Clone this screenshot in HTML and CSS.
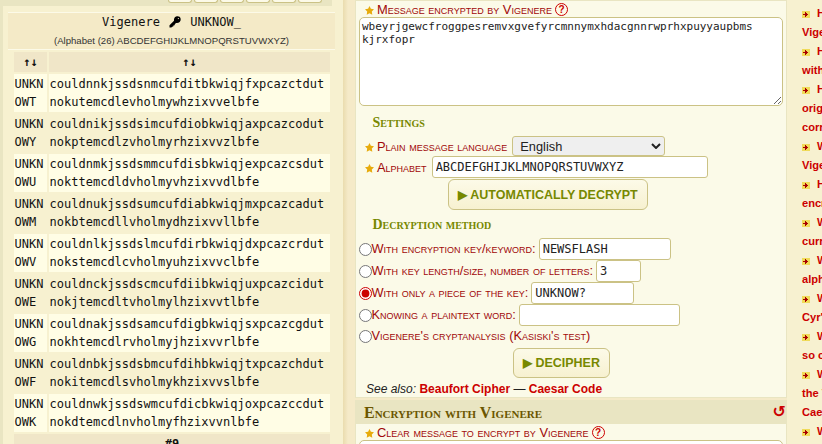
FILE: index.html
```html
<!DOCTYPE html>
<html lang="en">
<head>
<meta charset="utf-8">
<title>Vigenere Cipher</title>
<link rel="stylesheet" href="styles.css">
</head>
<body>
<svg class="defs" aria-hidden="true">
  <symbol id="star" viewBox="0 0 9 9"><path d="M4.5 0 5.9 2.8 9 3.3 6.8 5.5 7.3 8.7 4.5 7.3 1.7 8.7 2.2 5.5 0 3.3 3.1 2.8Z"/></symbol>
  <symbol id="arrow" viewBox="0 0 8 7"><rect width="8" height="7" fill="#f0db58"/><path d="M1 3H3V1H4V2H5V3H6V4H5V5H4V6H3V4H1Z" fill="#a90000"/></symbol>
</svg>
<div class="page">
  <aside class="results">
    <div class="toolbar"><i></i><i></i><i></i><i></i><i></i><i></i></div>
    <div class="summary">
      <div class="key">Vigenere <svg class="keyicon" viewBox="0 0 12 12"><path fill-rule="evenodd" d="M7.2.5C9 0 11.5.5 11.7 3c.2 2.8-2.3 4.6-4.7 4L5.8 8.2l-.2 1.1-1.2.1-.2 1.2-1.1.1-.7.8H.5V9.2L5 4.7C4.8 2.5 5.5 1 7.2.5ZM9.3 1.9a.6.6 0 1 0 .1 0Z"/></svg> UNKNOW_</div>
      <div class="alpha">(Alphabet (26) ABCDEFGHIJKLMNOPQRSTUVWXYZ)</div>
    </div>
    <table>
      <tr><th>↑↓</th><th>↑↓</th></tr>
      <tr><td>UNKN<br>OWT</td><td>couldnnkjssdsnmcufditbkwiqjfxpcazctdut<br>nokutemcdlevholmywhzixvvelbfe</td></tr>
      <tr><td>UNKN<br>OWY</td><td>couldnikjssdsimcufdiobkwiqjaxpcazcodut<br>nokptemcdlzvholmyrhzixvvzlbfe</td></tr>
      <tr><td>UNKN<br>OWU</td><td>couldnmkjssdsmmcufdisbkwiqjexpcazcsdut<br>nokttemcdldvholmyvhzixvvdlbfe</td></tr>
      <tr><td>UNKN<br>OWM</td><td>couldnukjssdsumcufdiabkwiqjmxpcazcadut<br>nokbtemcdllvholmydhzixvvllbfe</td></tr>
      <tr><td>UNKN<br>OWV</td><td>couldnlkjssdslmcufdirbkwiqjdxpcazcrdut<br>nokstemcdlcvholmyuhzixvvclbfe</td></tr>
      <tr><td>UNKN<br>OWE</td><td>couldnckjssdscmcufdiibkwiqjuxpcazcidut<br>nokjtemcdltvholmylhzixvvtlbfe</td></tr>
      <tr><td>UNKN<br>OWG</td><td>couldnakjssdsamcufdigbkwiqjsxpcazcgdut<br>nokhtemcdlrvholmyjhzixvvrlbfe</td></tr>
      <tr><td>UNKN<br>OWF</td><td>couldnbkjssdsbmcufdihbkwiqjtxpcazchdut<br>nokitemcdlsvholmykhzixvvslbfe</td></tr>
      <tr><td>UNKN<br>OWK</td><td>couldnwkjssdswmcufdicbkwiqjoxpcazccdut<br>nokdtemcdlnvholmyfhzixvvnlbfe</td></tr>
      <tr><th colspan="2" class="more">#9</th></tr>
    </table>
  </aside>
  <div class="gutter"></div>
  <main>
    <section class="decoder">
      <div class="label first"><svg class="star"><use href="#star"/></svg><span>Message encrypted by Vigenere</span> <b class="help">?</b></div>
      <textarea class="message" spellcheck="false">wbeyrjgewcfroggpesremvxgvefyrcmnnymxhdacgnnrwprhxpuyyaupbms
kjrxfopr</textarea>
      <h3>Settings</h3>
      <div class="label lang"><svg class="star"><use href="#star"/></svg><span>Plain message language</span>
        <span class="select">English<svg viewBox="0 0 10 6"><path d="M1 1 5 5 9 1" fill="none" stroke="#222" stroke-width="2"/></svg></span></div>
      <div class="label field"><svg class="star"><use href="#star"/></svg><span>Alphabet</span> <input class="w276" value="ABCDEFGHIJKLMNOPQRSTUVWXYZ"></div>
      <div class="action auto"><button>▶ AUTOMATICALLY DECRYPT</button></div>
      <h3 class="method">Decryption method</h3>
      <div class="option"><input type="radio" name="m"><span>With encryption key/keyword:</span> <input class="w132" value="NEWSFLASH"></div>
      <div class="option"><input type="radio" name="m"><span>With key length/size, number of letters:</span> <input class="w45" value="3"></div>
      <div class="option"><input type="radio" name="m" checked><span>With only a piece of the key:</span> <input class="w103" value="UNKNOW?"></div>
      <div class="option"><input type="radio" name="m"><span>Knowing a plaintext word:</span> <input class="w161" value=""></div>
      <div class="option last"><input type="radio" name="m"><span>Vigenere's cryptanalysis (Kasiski's test)</span></div>
      <div class="action"><button class="small">▶ DECIPHER</button></div>
      <p class="also"><em>See also:</em> <a>Beaufort Cipher</a> — <a>Caesar Code</a></p>
    </section>
    <section class="encoder">
      <h2><span>Encryption with Vigenere</span><b>↺</b></h2>
      <div class="label second"><svg class="star"><use href="#star"/></svg><span>Clear message to encrypt by Vigenere</span> <b class="help">?</b></div>
      <textarea class="message"></textarea>
    </section>
  </main>
  <nav>
    <p><svg><use href="#arrow"/></svg>How to encrypt using<br>Vigenere cipher?</p>
    <p><svg><use href="#arrow"/></svg>How to decrypt<br>with Vigenere?</p>
    <p><svg><use href="#arrow"/></svg>How to find the<br>original message and<br>corresponding key?</p>
    <p><svg><use href="#arrow"/></svg>What is the<br>Vigenere square?</p>
    <p><svg><use href="#arrow"/></svg>How to recognize<br>encrypted text?</p>
    <p><svg><use href="#arrow"/></svg>What is the<br>current variant?</p>
    <p><svg><use href="#arrow"/></svg>What is a mixed<br>alphabet?</p>
    <p><svg><use href="#arrow"/></svg>What is Saint<br>Cyr's slide?</p>
    <p><svg><use href="#arrow"/></svg>Why is the name<br>so called?</p>
    <p><svg><use href="#arrow"/></svg>What is between<br>the Vigenere and<br>Caesar ciphers?</p>
    <p><svg><use href="#arrow"/></svg>When was it</p>
  </nav>
</div>
</body>
</html>
```
FILE: styles.css
```css
* { box-sizing: border-box; }
html, body { margin: 0; height: 444px; overflow: hidden; }
body { font: 12px "Liberation Sans", Arial, sans-serif; color: #222; background: #f5eac8; }
.defs { display: none; }
.page { display: flex; height: 444px; overflow: hidden; }

.results { flex: none; width: 343px; background: #f7f1d0; border-left: 3px solid #e9e5c2; }
.toolbar { display: flex; gap: 2px; height: 6px; margin-right: 11px; padding-left: 165px; background: #e9e5c2; overflow: hidden; }
.toolbar i { width: 24px; height: 3px; background: #fcfae8; border: 1px solid #cbc285; border-top: 0; border-radius: 0 0 4px 4px; }
.summary { height: 38px; margin: 6px 8px 0 5px; border: solid #fcfae8; border-width: 1px 0; background: #f4eac7; text-align: center; white-space: nowrap; }
.key { height: 20px; font: 12px/18px "DejaVu Sans Mono", monospace; color: #111; }
.keyicon { width: 12px; height: 12px; margin: 0 2px; vertical-align: -2px; }
.alpha { font-size: 9.6px; line-height: 15px; color: #333; }
table { width: 320px; margin: 0 0 0 9px; border-spacing: 2px; table-layout: fixed; font: 12px/18px "DejaVu Sans Mono", monospace; color: #111; }
th { height: 20px; padding: 0; background: #f0e6c8; line-height: 20px; }
th:first-child:not(.more) { width: 33px; }
td { height: 38px; padding: 1px 0 1px 0.6px; white-space: nowrap; background: #f7f1d0; }
tr:nth-child(even) td { background: #fffde5; }

.gutter { flex: none; width: 12px; background: linear-gradient(90deg, #eadcae, #f5eac8 5px); }

main { flex: none; width: 432px; }
.decoder, .encoder { background: #fbfae8; border: 1px solid #e9e5c2; }
.decoder { height: 398px; }
.encoder { margin-top: 2px; border-top: 0; height: 60px; }
.label { display: flex; align-items: center; gap: 3px; padding-left: 9px; font-size: 12.9px; font-variant: small-caps; color: #a00808; white-space: nowrap; }
.star { width: 9px; height: 9px; fill: #e7ab0c; flex: none; margin-top: 2px; }
.first { height: 16px; }
.help { width: 13px; height: 13px; margin: 1px 0 0 0; border: 1px solid #c00; border-radius: 7px; font-size: 10px; line-height: 11px; text-align: center; color: #c00; }
.message { display: block; width: 424px; height: 89px; margin: 0 0 0 3px; padding: 2px; border: 1px solid #cbc285; border-radius: 5px; background: #fff; font: 11px/13px "DejaVu Sans Mono", monospace; color: #222; outline: 0; resize: vertical; }
h3 { height: 30px; margin: 0 0 0 16.5px; font: bold 14px/34px "Liberation Serif", serif; font-variant: small-caps; color: #778800; }
.lang { height: 20px; }
.select { display: flex; align-items: center; justify-content: space-between; width: 153px; height: 20px; margin-left: 2px; padding: 0 3px 0 7px; border: 1px solid #cbc285; border-radius: 3px; background: #efefef; font-size: 12.8px; font-variant: normal; color: #222; }
.select svg { width: 10px; height: 6px; }
input:not([type]) { height: 22px; padding: 0 3px; border: 1px solid #cbc285; border-radius: 3px; background: #fff; font: 12px "DejaVu Sans Mono", monospace; color: #222; }
.field { height: 22px; }
.field input { margin-left: 2px; }
.action { display: flex; justify-content: center; }
button { width: 200px; height: 31px; padding: 0 0 1px; border: 1px solid #cbc285; border-radius: 6px; background: linear-gradient(#fcfae8, #f7f1d0); font: bold 12.48px "Liberation Sans", sans-serif; color: #778800; }
.auto { height: 32px; padding: 1px 46px 0 0; }
button.small { width: 97px; height: 30px; margin-right: 19px; }
h3.method { height: 28px; line-height: 29px; }
.option { display: flex; align-items: center; height: 22px; padding-left: 3px; font-size: 12.8px; font-variant: small-caps; color: #a00808; white-space: nowrap; }
.option span { margin: -1px 0 0 -0.5px; }
.option input:not([type]) { margin-left: 3px; }
.option input[type=radio] { width: 13px; height: 13px; margin: 1px 0 0; accent-color: #c00; }
.option.last { height: 22px; margin-top: -1px; padding-bottom: 1px; }
.option.last + .action { padding-top: 1px; }
.w276 { width: 276px; } .w132 { width: 132px; } .w45 { width: 45px; } .w103 { width: 103px; } .w161 { width: 161px; }
.also { margin: 2px 0 0 10px; font-size: 12px; line-height: 18px; }
.also a { font-weight: bold; color: #c00; }
h2 { display: flex; justify-content: space-between; height: 24px; margin: 0; padding: 0 0 0 8px; background: #e9e5c2; font: bold 16px/25px "Liberation Serif", serif; font-variant: small-caps; color: #6b5600; }
h2 b { font: bold 16px/24px "DejaVu Sans", sans-serif; color: #c00; }
.second { height: 16px; }

nav { flex: none; width: 200px; padding: 4px 0 0 15px; background: #f7f1d0; font-weight: bold; line-height: 19px; color: #c00; font-size: 11.1px; white-space: nowrap; }
nav p { margin: 0; }
nav svg { width: 8px; height: 7px; margin-right: 7px; vertical-align: -1px; }
```
